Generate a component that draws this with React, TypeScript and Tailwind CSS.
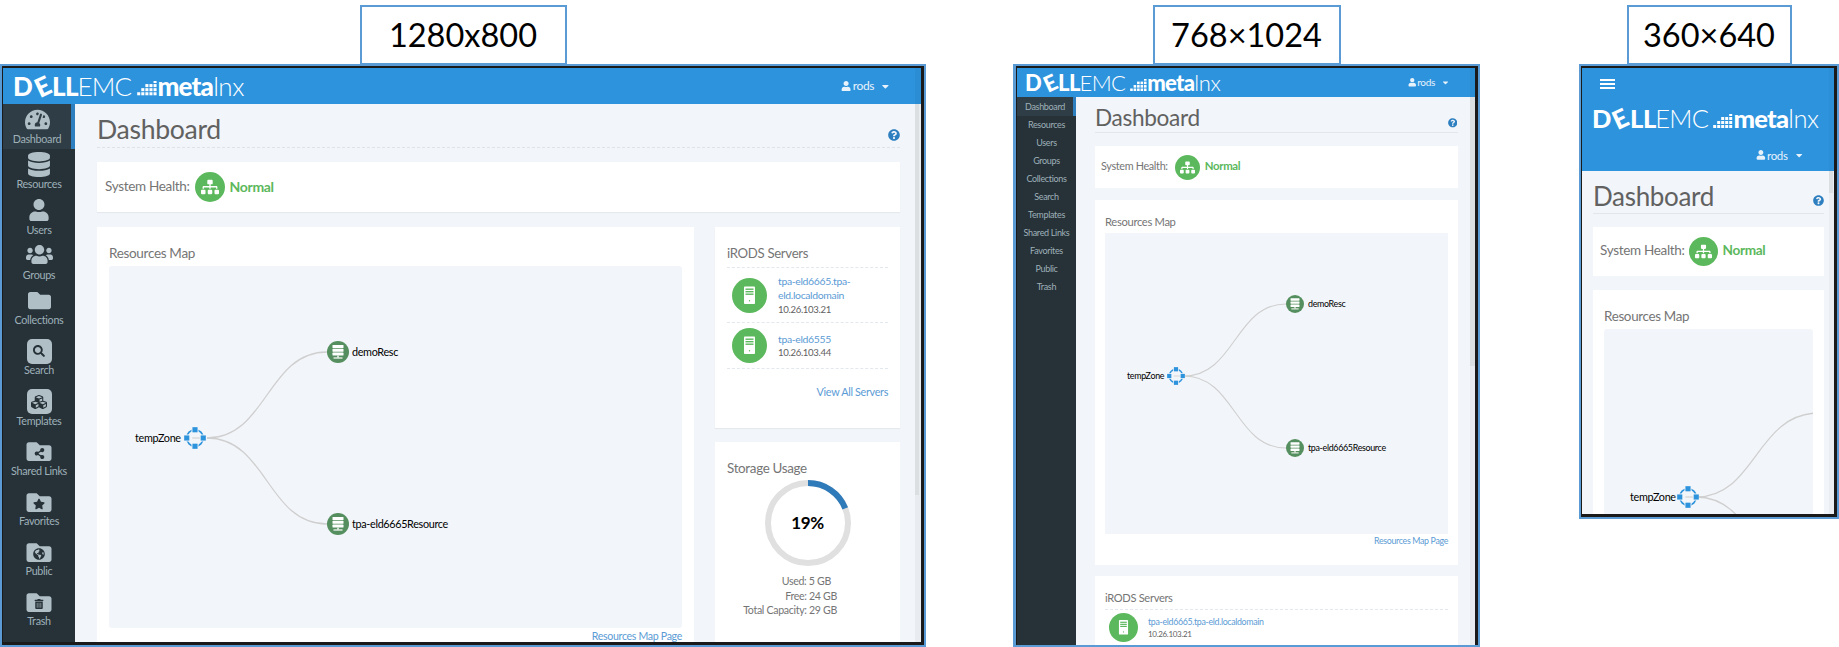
import type { ReactNode } from 'react';
import { FaCaretDown, FaCubes, FaDatabase, FaFolder, FaGlobeAmericas, FaQuestionCircle, FaSearch, FaShareAlt, FaSitemap, FaStar, FaTachometerAlt, FaTrashAlt, FaUser, FaUsers } from 'react-icons/fa';

function Logo({ className }: { className: string }) {
  return (
    <div className={`flex items-center whitespace-nowrap leading-none tracking-normal text-white ${className}`}>
      <span className="font-black">D</span>
      <span className="inline-block -rotate-[25deg] font-black mx-[0.08em]">E</span>
      <span className="font-black tracking-[-0.02em]">LL</span>
      <span className="-ml-[0.02em] font-light tracking-[-0.03em]">EMC</span>
      <svg viewBox="0 0 20 14" className="ml-[0.2em] h-[0.55em] w-[0.8em] mt-[0.2em] shrink-0" fill="#fff">
        <rect x="0" y="11" width="3" height="3" /><rect x="4" y="11" width="3" height="3" /><rect x="8" y="11" width="3" height="3" /><rect x="12" y="11" width="3" height="3" /><rect x="16" y="11" width="3" height="3" />
        <rect x="4" y="7" width="3" height="3" /><rect x="8" y="7" width="3" height="3" /><rect x="12" y="7" width="3" height="3" /><rect x="16" y="7" width="3" height="3" />
        <rect x="8" y="3" width="3" height="3" /><rect x="12" y="3" width="3" height="3" /><rect x="16" y="3" width="3" height="3" />
        <rect x="16" y="0" width="3" height="2" />
      </svg>
      <span className="font-black tracking-[-0.03em]">meta</span>
      <span className="font-light tracking-[-0.02em]">lnx</span>
    </div>
  );
}

function UserMenu({ className }: { className: string }) {
  return (
    <div className={`flex items-center text-[#e8f2fb] ${className}`}>
      <FaUser className="w-[0.85em] h-[0.85em] mr-[1px]" />
      <span>rods</span>
      <FaCaretDown className="ml-[6px] w-[0.9em] h-[0.9em]" />
    </div>
  );
}

function FolderIcon({ children }: { children: ReactNode }) {
  return (
    <span className="relative inline-flex text-[#b0bec5]">
      <FaFolder className="w-[28px] h-[25px]" />
      <span className="absolute inset-0 top-[3px] flex items-center justify-center text-[#263238]">{children}</span>
    </span>
  );
}

function SquareIcon({ children }: { children: ReactNode }) {
  return <span className="flex h-[25px] w-[25px] items-center justify-center rounded-[5px] bg-[#b0bec5] text-[#263238]">{children}</span>;
}

const wideNav = [
  { label: 'Dashboard', icon: <FaTachometerAlt className="w-[25px] h-[25px]" />, active: true },
  { label: 'Resources', icon: <FaDatabase className="w-[22px] h-[25px]" /> },
  { label: 'Users', icon: <FaUser className="w-[20px] h-[22px]" /> },
  { label: 'Groups', icon: <FaUsers className="w-[27px] h-[27px]" /> },
  { label: 'Collections', icon: <FaFolder className="w-[23px] h-[23px]" /> },
  { label: 'Search', tall: true, icon: <SquareIcon><FaSearch className="w-[12px] h-[12px]" /></SquareIcon> },
  { label: 'Templates', tall: true, icon: <SquareIcon><FaCubes className="w-[16px] h-[16px]" /></SquareIcon> },
  { label: 'Shared Links', tall: true, icon: <FolderIcon><FaShareAlt className="w-[11px] h-[11px]" /></FolderIcon> },
  { label: 'Favorites', tall: true, icon: <FolderIcon><FaStar className="w-[12px] h-[12px]" /></FolderIcon> },
  { label: 'Public', tall: true, icon: <FolderIcon><FaGlobeAmericas className="w-[12px] h-[12px]" /></FolderIcon> },
  { label: 'Trash', tall: true, icon: <FolderIcon><FaTrashAlt className="w-[10px] h-[10px]" /></FolderIcon> },
];

const narrowNav = ['Dashboard', 'Resources', 'Users', 'Groups', 'Collections', 'Search', 'Templates', 'Shared Links', 'Favorites', 'Public', 'Trash'];

function ZoneIcon({ className }: { className: string }) {
  const squares = [[12, 3], [12, 21], [3, 12], [21, 12]];
  return (
    <svg viewBox="0 0 24 24" className={className}>
      <circle cx="12" cy="12" r="9" fill="none" stroke="#2d93dd" strokeWidth="1.8" />
      <line x1="9" y1="12" x2="20" y2="12" stroke="#c9c9c9" strokeWidth="1" />
      {squares.map(([x, y]) => (
        <g key={`${x}-${y}`}>
          <rect x={x - 3.8} y={y - 3.8} width="7.6" height="7.6" fill="#f2f5f9" />
          <rect x={x - 2.8} y={y - 2.8} width="5.6" height="5.6" fill="#2d93dd" />
        </g>
      ))}
    </svg>
  );
}

function ResourceIcon({ className }: { className: string }) {
  return (
    <svg viewBox="0 0 22 22" className={className}>
      <circle cx="11" cy="11" r="11" fill="#558f5f" />
      <rect x="5.5" y="4" width="11" height="3" rx="0.6" fill="#fff" />
      <rect x="5.5" y="7.8" width="11" height="3" rx="0.6" fill="#fff" />
      <rect x="5.5" y="11.6" width="11" height="3" rx="0.6" fill="#fff" />
      <rect x="10.3" y="14.6" width="1.4" height="2" fill="#fff" />
      <rect x="6.5" y="16.4" width="9" height="1.2" fill="#fff" />
    </svg>
  );
}

function ServerIcon({ className }: { className: string }) {
  return (
    <svg viewBox="0 0 35 35" className={`shrink-0 ${className}`}>
      <circle cx="17.5" cy="17.5" r="17.5" fill="#5cb85c" />
      <rect x="12" y="8.5" width="11" height="17.5" rx="0.8" fill="#fff" />
      <rect x="13.5" y="10.5" width="8" height="1.4" fill="#5cb85c" />
      <rect x="13.5" y="13" width="8" height="1.4" fill="#5cb85c" />
      <rect x="13.5" y="15.5" width="8" height="1.4" fill="#5cb85c" />
      <circle cx="17.5" cy="22.8" r="0.7" fill="#5cb85c" />
    </svg>
  );
}

function Frame({ tab, className, tabClass, innerClass, children }: { tab: string; className: string; tabClass: string; innerClass: string; children: ReactNode }) {
  return (
    <div className={`flex flex-col items-center pt-[5px] ${className}`}>
      <div className={`z-10 flex h-[60px] items-center justify-center border-2 border-[#5b9bd5] bg-white text-[32.5px] leading-none tracking-normal text-black ${tabClass}`}>{tab}</div>
      <div className={`-mt-[1px] w-full border-2 border-[#5b9bd5] ${innerClass}`}>{children}</div>
    </div>
  );
}

export default function App() {
  return (
    <div className="flex h-[647px] w-[1839px] items-start overflow-hidden bg-white font-['Lato',sans-serif] tracking-[-0.02em]">
      {/* 1280x800 */}
      <Frame tab="1280x800" className="w-[926px]" tabClass="w-[207px]" innerClass="h-[583px]">
        <div className="relative flex h-full flex-col overflow-hidden border-[#1a1a1a] border-t-2 border-l border-r-[3px] border-b-[3px]">
          <div className="flex h-[36px] shrink-0 items-center justify-between bg-[#2d93dd] pl-[10px] pr-[30px]">
            <Logo className="text-[26px]" />
            <UserMenu className="text-[12px]" />
          </div>
          <div className="flex min-h-0 flex-1">
            <nav className="w-[72px] shrink-0 bg-[#263238] text-[#9fb0b8]">
              {wideNav.map((item) => (
                <div key={item.label} className={`flex flex-col items-center ${item.tall ? 'h-[50.2px] pt-[9px]' : 'h-[45.3px] pt-[2px]'} ${item.active ? 'border-r-4 border-[#2d7fc0] bg-[#2f3e46]' : ''}`}>
                  <div className={`flex items-center justify-center text-[#b0bec5] ${item.tall ? 'h-[24px]' : 'h-[26px]'}`}>{item.icon}</div>
                  <div className="text-[10.8px] leading-[14px] whitespace-nowrap">{item.label}</div>
                </div>
              ))}
            </nav>
            <main className="relative min-w-0 flex-1 overflow-hidden bg-[#f2f5f9] pl-[22px] pr-[21px]">
              <div className="flex h-[44px] items-center justify-between border-b border-dashed border-[#dfe3e8]">
                <h1 className="mt-[8px] text-[26.6px] leading-none text-[#616161]">Dashboard</h1>
                <FaQuestionCircle className="mt-[19px] h-[12px] w-[12px] text-[#2d7fc0]" />
              </div>
              <div className="mt-[14px] flex h-[50px] items-center bg-white pl-[8px] shadow-[0_1px_1px_rgba(0,0,0,0.05)]">
                <span className="-mt-[2px] text-[13.5px] text-[#757575]">System Health:</span>
                <span className="ml-[5px] flex h-[30px] w-[30px] items-center justify-center rounded-full bg-[#5cb85c] text-white"><FaSitemap className="h-[18px] w-[18px]" /></span>
                <span className="-mt-[2px] ml-[5px] text-[14px] font-bold text-[#5cb85c]">Normal</span>
              </div>
              <div className="mt-[15px] flex gap-[21px]">
                <section className="h-[430px] w-[597px] bg-white px-[12px] pt-[18px]">
                  <h2 className="text-[13.5px] leading-[16px] text-[#757575]">Resources Map</h2>
                  <div className="relative mt-[5px] h-[362px] rounded-[3px] bg-[#f2f5f9]">
                    <svg className="absolute inset-0 h-full w-full" fill="none" stroke="#cfcfcf" strokeWidth="1.3">
                      <path d="M98 172 C158 172 158 86 218 86" />
                      <path d="M98 172 C158 172 158 258 218 258" />
                    </svg>
                    <span className="absolute left-[26px] top-[163px] text-[10.8px] leading-[18px] text-black">tempZone</span>
                    <ZoneIcon className="absolute left-[75px] top-[161px] h-[22px] w-[22px]" />
                    <div className="absolute left-[218px] top-[75px] flex items-center gap-[3px] text-[10.8px] text-black"><ResourceIcon className="h-[22px] w-[22px]" />demoResc</div>
                    <div className="absolute left-[218px] top-[247px] flex items-center gap-[3px] text-[10.8px] text-black"><ResourceIcon className="h-[22px] w-[22px]" />tpa-eld6665Resource</div>
                  </div>
                  <div className="mt-[1px] text-right text-[10.6px] leading-[15px] text-[#5b9bd5]">Resources Map Page</div>
                </section>
                <aside className="w-[185px]">
                  <section className="h-[201px] bg-white px-[12px] pt-[18px] shadow-[0_1px_1px_rgba(0,0,0,0.05)]">
                    <h2 className="border-b border-dashed border-[#e3e8ee] pb-[6px] text-[13.2px] leading-[16px] text-[#757575]">iRODS Servers</h2>
                    <div className="flex h-[55px] items-center gap-[11px] border-b border-dashed border-[#e3e8ee] pl-[5px]">
                      <ServerIcon className="h-[35px] w-[35px]" />
                      <div className="pt-[1px] text-[10.4px] leading-[14.5px] text-[#5b9bd5]">tpa-eld6665.tpa-<br />eld.localdomain<div className="text-[9.6px] text-[#616161]">10.26.103.21</div></div>
                    </div>
                    <div className="flex h-[46px] items-center gap-[11px] border-b border-dashed border-[#e3e8ee] pl-[5px]">
                      <ServerIcon className="h-[35px] w-[35px]" />
                      <div className="pt-[1px] text-[10.4px] leading-[14.5px] text-[#5b9bd5]">tpa-eld6555<div className="text-[9.6px] text-[#616161]">10.26.103.44</div></div>
                    </div>
                    <div className="mt-[15px] text-right text-[10.8px] leading-[15px] text-[#5b9bd5]">View All Servers</div>
                  </section>
                  <section className="mt-[14px] h-[200px] bg-white px-[12px] pt-[18px]">
                    <h2 className="text-[13.4px] leading-[16px] text-[#757575]">Storage Usage</h2>
                    <div className="relative mx-auto mt-[4px] h-[86px] w-[86px]">
                      <svg viewBox="0 0 86 86" className="h-full w-full" fill="none" strokeWidth="6">
                        <circle cx="43" cy="43" r="40" stroke="#e0e0e0" />
                        <circle cx="43" cy="43" r="40" stroke="#2f7ab9" strokeDasharray="47.8 251.3" transform="rotate(-90 43 43)" />
                      </svg>
                      <span className="absolute inset-0 flex items-center justify-center text-[17px] font-bold text-black">19%</span>
                    </div>
                    <div className="mt-[8px] pr-[51px] text-right text-[10.6px] leading-[14.5px] text-[#757575] whitespace-nowrap">
                      <div className="pr-[6px]">Used: 5 GB</div>
                      <div>Free: 24 GB</div>
                      <div>Total Capacity: 29 GB</div>
                    </div>
                  </section>
                </aside>
              </div>
            </main>
          </div>
          <div className="absolute bottom-0 right-0 top-0 w-[6px] bg-black/[0.04]" />
          <div className="absolute right-[2px] top-[36px] h-[391px] w-[4px] bg-black/[0.05]" />
        </div>
      </Frame>

      {/* 768x1024 */}
      <Frame tab="768×1024" className="ml-[87px] w-[467px]" tabClass="w-[188px]" innerClass="h-[583px] border-l-[3px]">
        <div className="relative flex h-full flex-col overflow-hidden border-[#1a1a1a] border-t-2 border-l border-r-[3px]">
          <div className="flex h-[29px] shrink-0 items-center justify-between bg-[#2d93dd] pl-[8px] pr-[25px]">
            <Logo className="text-[22px]" />
            <UserMenu className="text-[10px]" />
          </div>
          <div className="flex min-h-0 flex-1">
            <nav className="w-[59px] shrink-0 bg-[#263238] text-[#9fb0b8]">
              {narrowNav.map((label, i) => (
                <div key={label} className={`flex items-center justify-center whitespace-nowrap text-[9px] ${i === 0 ? 'h-[19px] border-r-[3px] border-[#2d7fc0] bg-[#2f3e46]' : 'h-[18px]'}`}>{label}</div>
              ))}
            </nav>
            <main className="relative min-w-0 flex-1 overflow-hidden bg-[#f2f5f9] pl-[19px] pr-[17px]">
              <div className="flex h-[36px] items-center justify-between border-b border-[#e3e7ec]">
                <h1 className="mt-[8px] text-[22.6px] leading-none text-[#616161]">Dashboard</h1>
                <FaQuestionCircle className="mt-[17px] mr-[1px] h-[9.5px] w-[9.5px] text-[#2d7fc0]" />
              </div>
              <div className="mt-[13px] flex h-[42px] items-center bg-white pl-[6px]">
                <span className="-mt-[2px] text-[10.8px] text-[#757575]">System Health:</span>
                <span className="ml-[7px] flex h-[25px] w-[25px] items-center justify-center rounded-full bg-[#5cb85c] text-white"><FaSitemap className="h-[15px] w-[15px]" /></span>
                <span className="-mt-[2px] ml-[5px] text-[11.4px] font-bold text-[#5cb85c]">Normal</span>
              </div>
              <section className="mt-[12px] h-[365px] bg-white px-[10px] pt-[15px]">
                <h2 className="text-[11.2px] leading-[14px] text-[#757575]">Resources Map</h2>
                <div className="relative mt-[4px] h-[301px] bg-[#f2f5f9]">
                  <svg className="absolute inset-0 h-full w-full" fill="none" stroke="#cfcfcf" strokeWidth="1.1">
                    <path d="M79 143 C130 143 130 71 181 71" />
                    <path d="M79 143 C130 143 130 215 181 215" />
                  </svg>
                  <span className="absolute left-[22px] top-[135px] text-[8.9px] leading-[16px] text-black">tempZone</span>
                  <ZoneIcon className="absolute left-[62px] top-[134px] h-[18px] w-[18px]" />
                  <div className="absolute left-[181px] top-[62px] flex items-center gap-[4px] text-[8.9px] text-black"><ResourceIcon className="h-[18px] w-[18px]" />demoResc</div>
                  <div className="absolute left-[181px] top-[206px] flex items-center gap-[4px] text-[8.9px] text-black"><ResourceIcon className="h-[18px] w-[18px]" />tpa-eld6665Resource</div>
                </div>
                <div className="mt-[1px] text-right text-[8.8px] leading-[12px] text-[#5b9bd5]">Resources Map Page</div>
              </section>
              <section className="mt-[11px] h-[80px] bg-white px-[10px] pt-[15px]">
                <h2 className="border-b border-dashed border-[#e3e8ee] pb-[4px] text-[11.1px] leading-[14px] text-[#757575]">iRODS Servers</h2>
                <div className="mt-[3px] flex items-center gap-[10px] pl-[4px]">
                  <ServerIcon className="h-[29px] w-[29px]" />
                  <div className="text-[8.8px] leading-[13px] text-[#5b9bd5]">tpa-eld6665.tpa-eld.localdomain<div className="text-[8px] text-[#616161]">10.26.103.21</div></div>
                </div>
              </section>
            </main>
          </div>
          <div className="absolute bottom-0 right-0 top-0 w-[5px] bg-black/[0.04]" />
          <div className="absolute right-0 top-[29px] h-[269px] w-[5px] bg-black/[0.05]" />
        </div>
      </Frame>

      {/* 360x640 */}
      <Frame tab="360×640" className="ml-[99px] w-[260px]" tabClass="w-[165px]" innerClass="h-[455px]">
        <div className="relative flex h-full flex-col overflow-hidden border-[#1a1a1a] border-t-2 border-l border-r-[3px] border-b-[3px]">
          <header className="h-[103px] shrink-0 bg-[#2d93dd]">
            <div className="ml-[18px] pt-[11px]">
              <div className="flex h-[10px] w-[15px] flex-col justify-between">
                <span className="h-[2px] bg-white" /><span className="h-[2px] bg-white" /><span className="h-[2px] bg-white" />
              </div>
            </div>
            <Logo className="ml-[10px] mt-[17px] text-[25.5px]" />
            <div className="mt-[15px] flex justify-end pr-[30px]"><UserMenu className="text-[11.5px]" /></div>
          </header>
          <main className="relative min-h-0 flex-1 overflow-hidden bg-[#f2f5f9] pl-[11px] pr-[10px]">
            <div className="flex h-[43px] items-center justify-between border-b border-[#e3e7ec]">
              <h1 className="mt-[7px] text-[26px] leading-none text-[#616161]">Dashboard</h1>
              <FaQuestionCircle className="mt-[17px] h-[11px] w-[11px] text-[#2d7fc0]" />
            </div>
            <div className="mt-[13px] flex h-[49px] items-center bg-white pl-[7px]">
              <span className="-mt-[2px] text-[13.5px] text-[#757575]">System Health:</span>
              <span className="ml-[4px] flex h-[29px] w-[29px] items-center justify-center rounded-full bg-[#5cb85c] text-white"><FaSitemap className="h-[17px] w-[17px]" /></span>
              <span className="-mt-[2px] ml-[5px] text-[13.6px] font-bold text-[#5cb85c]">Normal</span>
            </div>
            <section className="mt-[14px] h-[300px] bg-white px-[11px] pt-[18px]">
              <h2 className="text-[13.4px] leading-[16px] text-[#757575]">Resources Map</h2>
              <div className="relative mt-[5px] h-[280px] overflow-hidden rounded-[3px] bg-[#f2f5f9]">
                <svg className="absolute inset-0 h-full w-full" fill="none" stroke="#cfcfcf" strokeWidth="1.3">
                  <path d="M92 168 C152 168 152 84 215 84" />
                  <path d="M92 168 C152 168 152 254 215 254" />
                </svg>
                <span className="absolute left-[26px] top-[159px] text-[10.8px] leading-[18px] text-black">tempZone</span>
                <ZoneIcon className="absolute left-[73px] top-[157px] h-[22px] w-[22px]" />
              </div>
            </section>
          </main>
          <div className="absolute bottom-0 right-0 top-0 w-[5px] bg-black/[0.03]" />
          <div className="absolute right-[1px] top-[103px] h-[22px] w-[4px] bg-black/[0.06]" />
        </div>
      </Frame>
    </div>
  );
}
